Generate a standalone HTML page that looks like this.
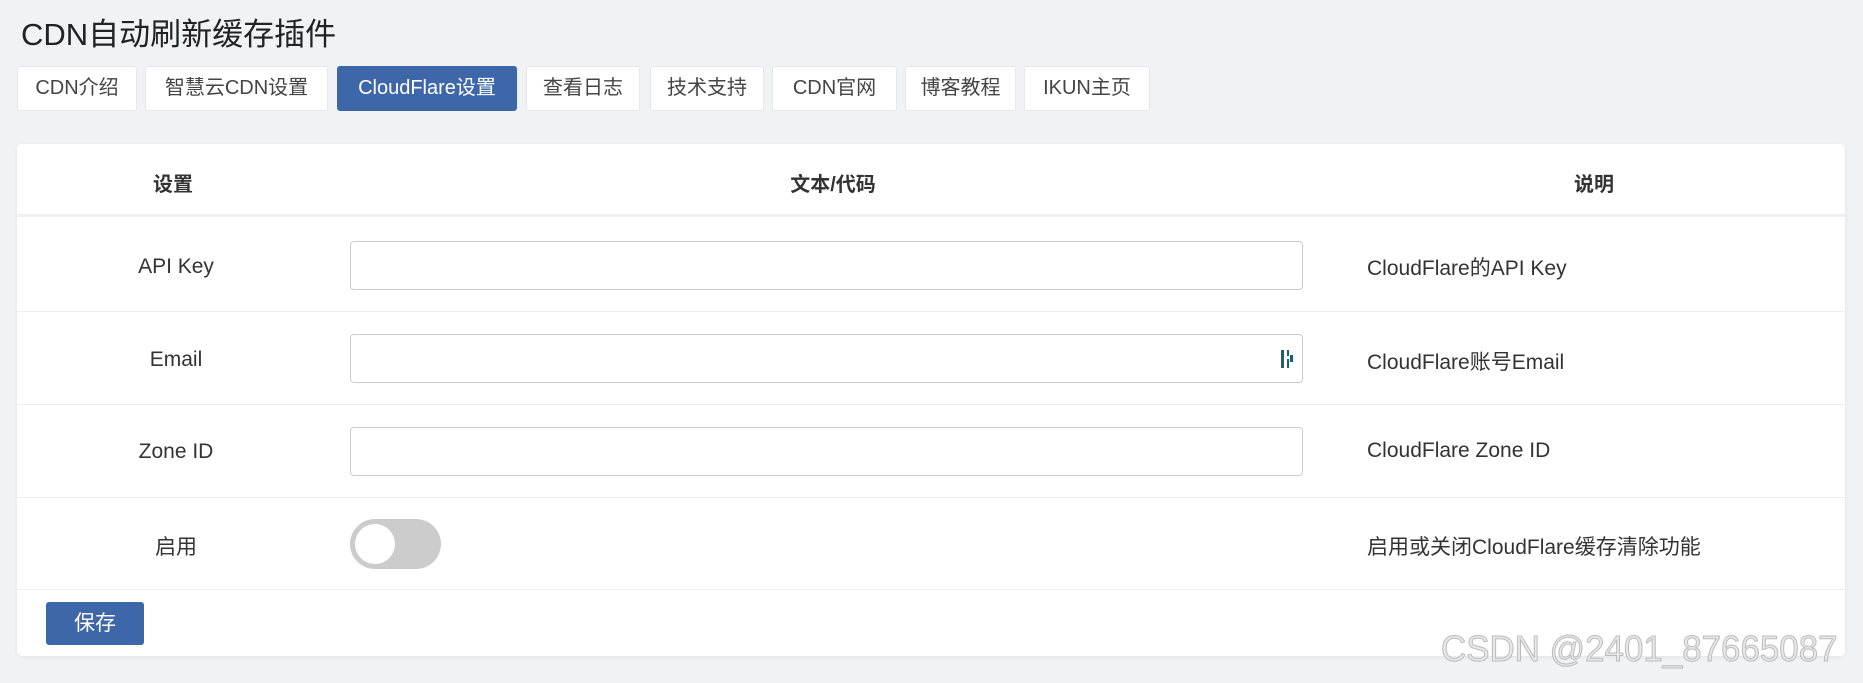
<!DOCTYPE html>
<html><head><meta charset="utf-8"><style>
*{box-sizing:border-box;margin:0;padding:0}
body{width:1863px;height:683px;background:#f1f2f4;font-family:"Liberation Sans","Noto Sans CJK SC",sans-serif;color:#333;position:relative;overflow:hidden}
.title{position:absolute;left:21px;top:9px;font-size:31px;color:#222}
.tab{position:absolute;top:66px;height:45px;background:#fff;border:1px solid #e6e7ea;border-radius:3px;font-size:20px;line-height:43px;text-align:center;color:#444}
.tab.on{background:#3d67a8;color:#fff;border-color:#3d67a8}
.card{position:absolute;left:17px;top:144px;width:1828px;height:512px;background:#fff;border-radius:5px;box-shadow:0 1px 4px rgba(0,0,0,.06)}
.hd{position:absolute;top:0;left:0;right:0;height:73px;border-bottom:3px solid #eef0f2;font-weight:bold;font-size:20px}
.hd span{position:absolute;top:24px;transform:translateX(-50%)}
.row{position:absolute;left:0;right:0;border-bottom:1px solid #eceef0;font-size:21px}
.lab{position:absolute;left:159px;transform:translateX(-50%);white-space:nowrap}
.inp{position:absolute;left:333px;width:953px;height:49px;border:1px solid #ccc;border-radius:4px}
.desc{position:absolute;left:1350px;white-space:nowrap}
.wm{position:absolute;left:1441px;top:628px;font-size:36px;color:#e8e8e8;-webkit-text-stroke:1px #bbb;letter-spacing:0;white-space:nowrap;transform:scaleX(0.97);transform-origin:left}
</style></head><body>
<div class="title">CDN自动刷新缓存插件</div>
<div class="tab" style="left:17px;width:120px">CDN介绍</div>
<div class="tab" style="left:145px;width:183px">智慧云CDN设置</div>
<div class="tab on" style="left:337px;width:180px">CloudFlare设置</div>
<div class="tab" style="left:526px;width:114px">查看日志</div>
<div class="tab" style="left:650px;width:114px">技术支持</div>
<div class="tab" style="left:772px;width:125px">CDN官网</div>
<div class="tab" style="left:905px;width:111px">博客教程</div>
<div class="tab" style="left:1024px;width:126px">IKUN主页</div>
<div class="card">
<div class="hd"><span style="left:156px">设置</span><span style="left:816px">文本/代码</span><span style="left:1577px">说明</span></div>
<div class="row" style="top:73px;height:95px"><span class="lab" style="top:38px">API Key</span><div class="inp" style="top:24px"></div><span class="desc" style="top:35px">CloudFlare的API Key</span></div>
<div class="row" style="top:168px;height:93px"><span class="lab" style="top:36px">Email</span><div class="inp" style="top:22px"><svg style="position:absolute;right:8px;top:14px" width="14" height="20"><rect x="1" y="1" width="3" height="18" fill="#1d5f73"/><rect x="7" y="1" width="2" height="6" fill="#1d5f73"/><rect x="7" y="10" width="2" height="9" fill="#1d5f73"/><rect x="10" y="6" width="3" height="7" fill="#1d5f73"/></svg></div><span class="desc" style="top:34px">CloudFlare账号Email</span></div>
<div class="row" style="top:261px;height:93px"><span class="lab" style="top:35px">Zone ID</span><div class="inp" style="top:22px"></div><span class="desc" style="top:34px">CloudFlare Zone ID</span></div>
<div class="row" style="top:354px;height:92px"><span class="lab" style="top:33px">启用</span><div style="position:absolute;left:333px;top:21px;width:91px;height:50px;border-radius:25px;background:#ccc"><div style="position:absolute;left:5px;top:5px;width:40px;height:40px;border-radius:50%;background:#fff"></div></div><span class="desc" style="top:33px">启用或关闭CloudFlare缓存清除功能</span></div>
<div style="position:absolute;left:29px;top:458px;width:98px;height:43px;background:#3d67a8;border-radius:3px;color:#fff;font-size:21px;line-height:43px;text-align:center">保存</div>
</div>
<div class="wm">CSDN @2401_87665087</div>
</body></html>
